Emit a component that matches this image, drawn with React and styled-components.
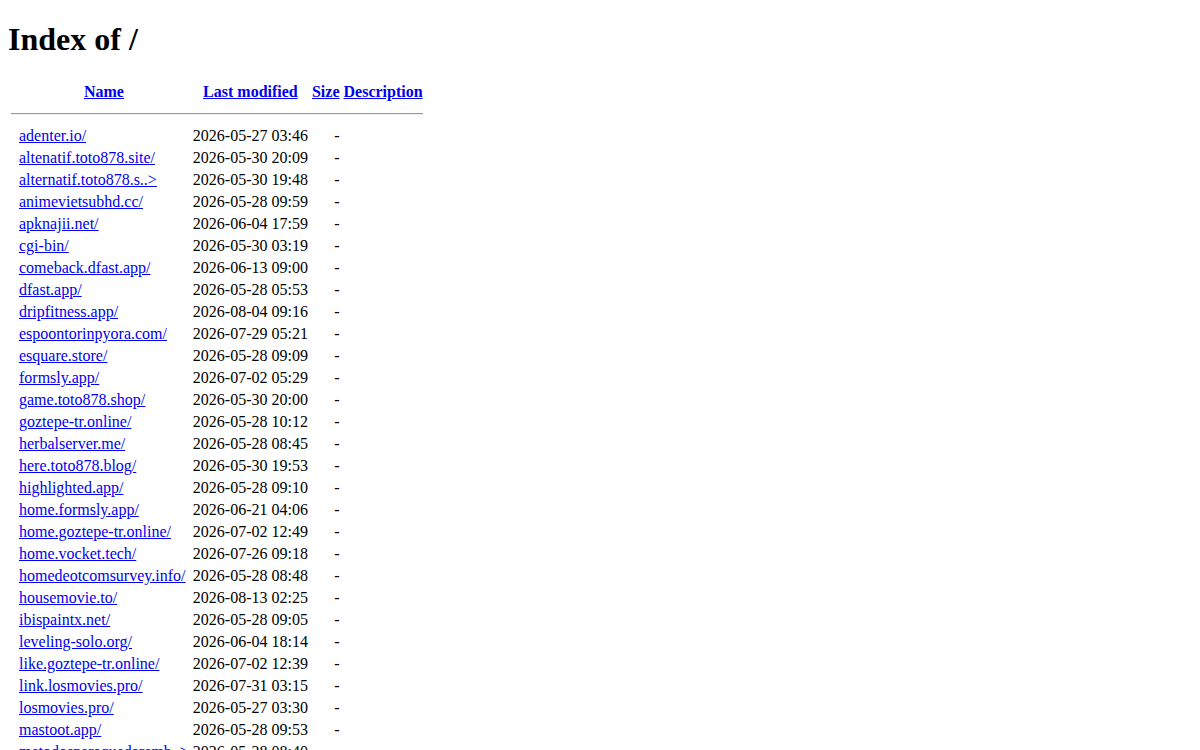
import React from "react";
import styled, { createGlobalStyle } from "styled-components";

const GlobalStyle = createGlobalStyle`
  body {
    margin: 8px;
    background: #fff;
    color: #000;
    font-family: "Liberation Serif", "Times New Roman", serif;
    font-size: 16px;
  }
  a { color: #0000ee; }
`;

const entries = [
  ["adenter.io/", "2026-05-27 03:46"],
  ["altenatif.toto878.site/", "2026-05-30 20:09"],
  ["alternatif.toto878.s..>", "2026-05-30 19:48"],
  ["animevietsubhd.cc/", "2026-05-28 09:59"],
  ["apknajii.net/", "2026-06-04 17:59"],
  ["cgi-bin/", "2026-05-30 03:19"],
  ["comeback.dfast.app/", "2026-06-13 09:00"],
  ["dfast.app/", "2026-05-28 05:53"],
  ["dripfitness.app/", "2026-08-04 09:16"],
  ["espoontorinpyora.com/", "2026-07-29 05:21"],
  ["esquare.store/", "2026-05-28 09:09"],
  ["formsly.app/", "2026-07-02 05:29"],
  ["game.toto878.shop/", "2026-05-30 20:00"],
  ["goztepe-tr.online/", "2026-05-28 10:12"],
  ["herbalserver.me/", "2026-05-28 08:45"],
  ["here.toto878.blog/", "2026-05-30 19:53"],
  ["highlighted.app/", "2026-05-28 09:10"],
  ["home.formsly.app/", "2026-06-21 04:06"],
  ["home.goztepe-tr.online/", "2026-07-02 12:49"],
  ["home.vocket.tech/", "2026-07-26 09:18"],
  ["homedeotcomsurvey.info/", "2026-05-28 08:48"],
  ["housemovie.to/", "2026-08-13 02:25"],
  ["ibispaintx.net/", "2026-05-28 09:05"],
  ["leveling-solo.org/", "2026-06-04 18:14"],
  ["like.goztepe-tr.online/", "2026-07-02 12:39"],
  ["link.losmovies.pro/", "2026-07-31 03:15"],
  ["losmovies.pro/", "2026-05-27 03:30"],
  ["mastoot.app/", "2026-05-28 09:53"],
  ["metodosparaquedaremb..>", "2026-05-28 08:40"],
  ["movies.losmovies.pro/", "2026-06-02 11:27"],
  ["nextsite.formsly.app/", "2026-07-04 16:08"],
];

export default function App() {
  return (
    <>
      <GlobalStyle />
      <Title>Index of /</Title>
      <Listing>
        <tbody>
          <tr>
            <Head><IconSlot /></Head>
            <Head><a href="?C=N;O=D">Name</a></Head>
            <Head><a href="?C=M;O=A">Last modified</a></Head>
            <Head><a href="?C=S;O=A">Size</a></Head>
            <Head><a href="?C=D;O=A">Description</a></Head>
          </tr>
          <tr>
            <Head colSpan={5}><Rule /></Head>
          </tr>
          {entries.map(([name, date]) => (
            <tr key={name}>
              <Cell><IconSlot /></Cell>
              <Cell><a href={name}>{name}</a></Cell>
              <Cell $right>{date}</Cell>
              <Cell $right>-</Cell>
              <Cell>&nbsp;</Cell>
            </tr>
          ))}
        </tbody>
      </Listing>
    </>
  );
}

const Title = styled.h1`
  font-size: 2em;
  font-weight: bold;
  margin: calc(0.67em - 8px) 0 0.67em;
`;

const Listing = styled.table`
  border-collapse: separate;
  border-spacing: 2px;
`;

const Head = styled.th`
  padding: 1px;
  font-weight: bold;
  text-align: center;
  vertical-align: top;
`;

const Cell = styled.td`
  padding: 1px;
  vertical-align: top;
  text-align: ${(p) => (p.$right ? "right" : "left")};
`;

// folder icons are missing on the server, leaving a narrow empty slot
const IconSlot = styled.span`
  display: inline-block;
  width: 4px;
`;

const Rule = styled.hr`
  margin: 8px 0;
  border: 0;
  border-top: 1px solid #9a9a9a;
  border-bottom: 1px solid #eeeeee;
`;
